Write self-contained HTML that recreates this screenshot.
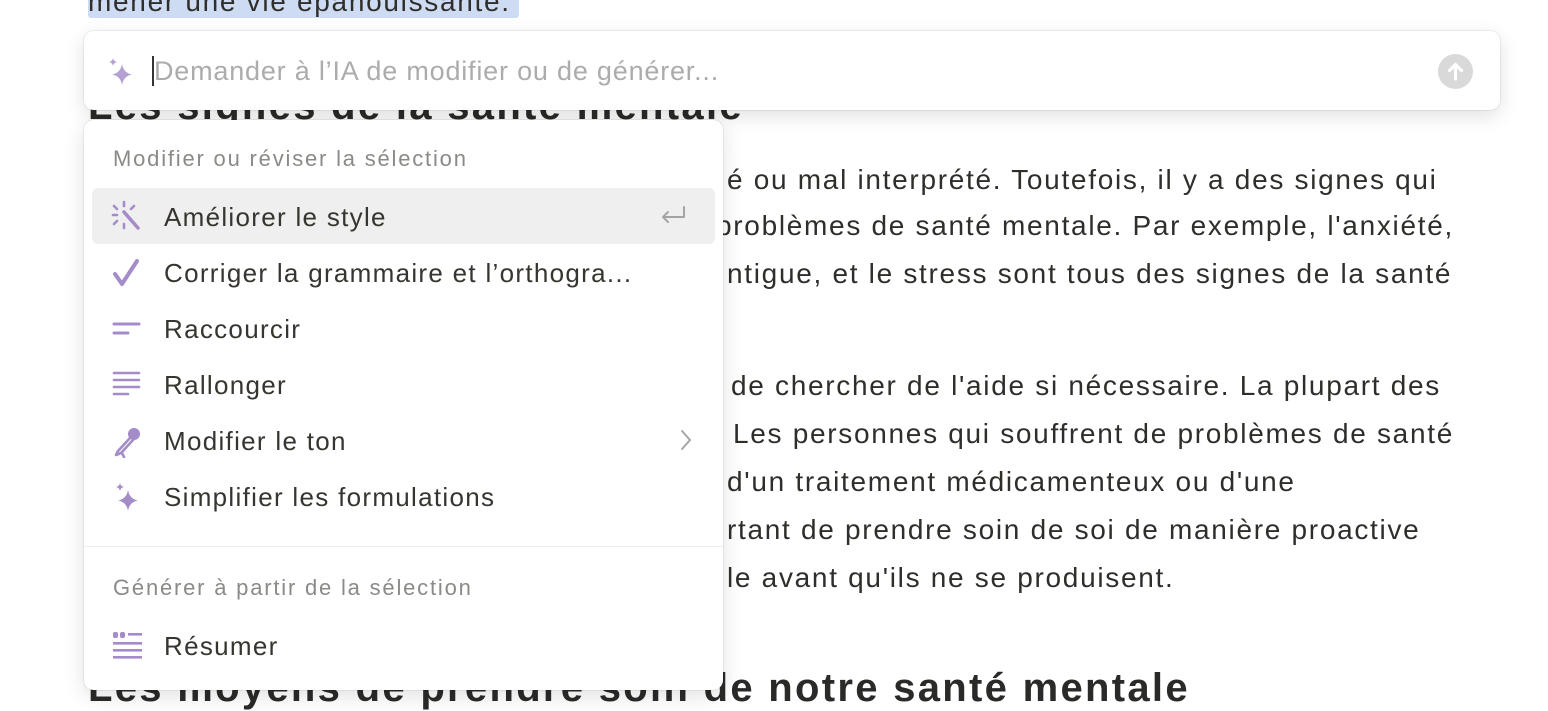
<!DOCTYPE html>
<html><head><meta charset="utf-8"><style>
*{margin:0;padding:0;box-sizing:border-box}
body{width:1548px;height:704px;overflow:hidden;background:#fff;font-family:"Liberation Sans",sans-serif;color:#37352f;position:relative}
.t{position:absolute;font-size:28px;letter-spacing:1.7px;white-space:nowrap;line-height:32px;color:#2f2e2b}
.h{position:absolute;font-size:40px;letter-spacing:2.3px;font-weight:bold;white-space:nowrap;color:#2a2a28}
.box{position:absolute;left:84px;top:31px;width:1416px;height:79px;background:#fff;border-radius:10px;box-shadow:0 0 0 1px rgba(0,0,0,.06),0 6px 20px rgba(0,0,0,.12)}
.menu{position:absolute;left:84px;top:120px;width:639px;height:570px;background:#fff;border-radius:10px;box-shadow:0 0 0 1px rgba(0,0,0,.06),0 6px 22px rgba(0,0,0,.12)}
.sec{position:absolute;left:29px;font-size:22px;letter-spacing:1.8px;color:#8b8a87;white-space:nowrap}
.it{position:absolute;left:8px;width:623px;height:56px;border-radius:6px}
.it span{position:absolute;left:72px;top:14px;font-size:26px;letter-spacing:1.3px;color:#37352f;white-space:nowrap}
.it svg{position:absolute;left:20px;top:14px}
</style></head><body>
<div class="t" style="left:88px;top:-14px;background:#cddcf3;padding:0 8px 0 0;border-radius:3px">mener une vie épanouissante.</div>
<div class="h" style="left:88px;top:84px">Les signes de la santé mentale</div>
<div class="t" style="left:727px;top:164px">é ou mal interprété. Toutefois, il y a des signes qui</div>
<div class="t" style="left:716px;top:210px">problèmes de santé mentale. Par exemple, l'anxiété,</div>
<div class="t" style="left:727px;top:258px">ntigue, et le stress sont tous des signes de la santé</div>
<div class="t" style="left:731px;top:370px">de chercher de l'aide si nécessaire. La plupart des</div>
<div class="t" style="left:733px;top:418px">Les personnes qui souffrent de problèmes de santé</div>
<div class="t" style="left:727px;top:466px">d'un traitement médicamenteux ou d'une</div>
<div class="t" style="left:727px;top:514px">rtant de prendre soin de soi de manière proactive</div>
<div class="t" style="left:727px;top:562px">le avant qu'ils ne se produisent.</div>
<div class="h" style="left:88px;top:666px">Les moyens de prendre soin de notre santé mentale</div>

<div class="box">
<svg style="position:absolute;left:22px;top:25px" width="30" height="32" viewBox="0 0 30 32"><path d="M16 8 Q17.5 17 26 18.5 Q17.5 20 16 29 Q14.5 20 6 18.5 Q14.5 17 16 8Z" fill="#b3a1d2"/><path d="M7 2 Q7.6 5.4 11 6 Q7.6 6.6 7 10 Q6.4 6.6 3 6 Q6.4 5.4 7 2Z" fill="#b3a1d2"/></svg>
<div style="position:absolute;left:68px;top:25px;width:2px;height:30px;background:#333"></div>
<div style="position:absolute;left:70px;top:25px;font-size:27px;letter-spacing:0.8px;color:#acacac;white-space:nowrap">Demander à l’IA de modifier ou de générer...</div>
<div style="position:absolute;left:1354px;top:23px;width:35px;height:35px;border-radius:50%;background:#d9d9d9"><svg width="35" height="35" viewBox="0 0 35 35"><path d="M17.5 25V11M11.5 16.5L17.5 10.5L23.5 16.5" stroke="#fff" stroke-width="3.2" fill="none" stroke-linecap="round" stroke-linejoin="round"/></svg></div>
</div>

<div class="menu">
<div class="sec" style="top:26px">Modifier ou réviser la sélection</div>
<div class="it" style="top:68px;background:#efefef">
<svg width="34" height="32" viewBox="0 0 34 32" style="left:18px;top:12px"><g stroke="#a48cc8" stroke-width="2.6" stroke-linecap="round"><path d="M14 2v4M14 24v4M3 15h4M4 6l3 3M24 6l-3 3M4 24l3-3"/><path d="M14 12L28 28" stroke-width="3.5"/></g></svg>
<span>Améliorer le style</span>
<svg width="30" height="24" viewBox="0 0 30 24" style="left:566px;top:16px"><path d="M26 3v10H5M10 8l-5 5 5 5" stroke="#a4a4a4" stroke-width="2" fill="none" stroke-linecap="round" stroke-linejoin="round"/></svg>
</div>
<div class="it" style="top:124px"><svg width="30" height="30" viewBox="0 0 30 30"><path d="M3 16L10 26L25 3" stroke="#a48cc8" stroke-width="4" fill="none" stroke-linecap="round" stroke-linejoin="round"/></svg><span>Corriger la grammaire et l’orthogra...</span></div>
<div class="it" style="top:180px"><svg width="30" height="30" viewBox="0 0 30 30"><path d="M2 10h25M2 19h14" stroke="#a48cc8" stroke-width="3" stroke-linecap="round"/></svg><span>Raccourcir</span></div>
<div class="it" style="top:236px"><svg width="30" height="30" viewBox="0 0 30 30"><path d="M2 3h25M2 10h25M2 17h25M2 24h14" stroke="#a48cc8" stroke-width="2.6" stroke-linecap="round"/></svg><span>Rallonger</span></div>
<div class="it" style="top:292px"><svg width="32" height="32" viewBox="0 0 32 32"><circle cx="22" cy="8" r="6" fill="#a48cc8"/><path d="M18 12L6 25L4 29L9 27L21 14M10 27l2 4" stroke="#a48cc8" stroke-width="2.6" fill="none" stroke-linecap="round" stroke-linejoin="round"/></svg><span>Modifier le ton</span>
<svg width="16" height="24" viewBox="0 0 16 24" style="left:586px;top:16px"><path d="M4 3l8 9-8 9" stroke="#a4a4a4" stroke-width="2" fill="none" stroke-linecap="round"/></svg></div>
<div class="it" style="top:348px"><svg width="30" height="32" viewBox="0 0 30 32"><path d="M16 8 Q17.5 17 26 18.5 Q17.5 20 16 29 Q14.5 20 6 18.5 Q14.5 17 16 8Z" fill="#a48cc8"/><path d="M8 1 Q8.6 4.4 12 5 Q8.6 5.6 8 9 Q7.4 5.6 4 5 Q7.4 4.4 8 1Z" fill="#a48cc8"/></svg><span>Simplifier les formulations</span></div>
<div style="position:absolute;left:0;top:426px;width:639px;height:1px;background:#ececec"></div>
<div class="sec" style="top:455px">Générer à partir de la sélection</div>
<div class="it" style="top:497px"><svg width="32" height="30" viewBox="0 0 32 30"><g fill="#a48cc8"><rect x="1" y="1" width="5" height="6" rx="2"/><rect x="8" y="1" width="5" height="6" rx="2"/><rect x="16" y="2" width="14" height="2.6"/><rect x="1" y="11" width="29" height="2.6"/><rect x="1" y="18" width="29" height="2.6"/><rect x="1" y="25" width="29" height="2.6"/></g></svg><span>Résumer</span></div>
</div>
</body></html>
